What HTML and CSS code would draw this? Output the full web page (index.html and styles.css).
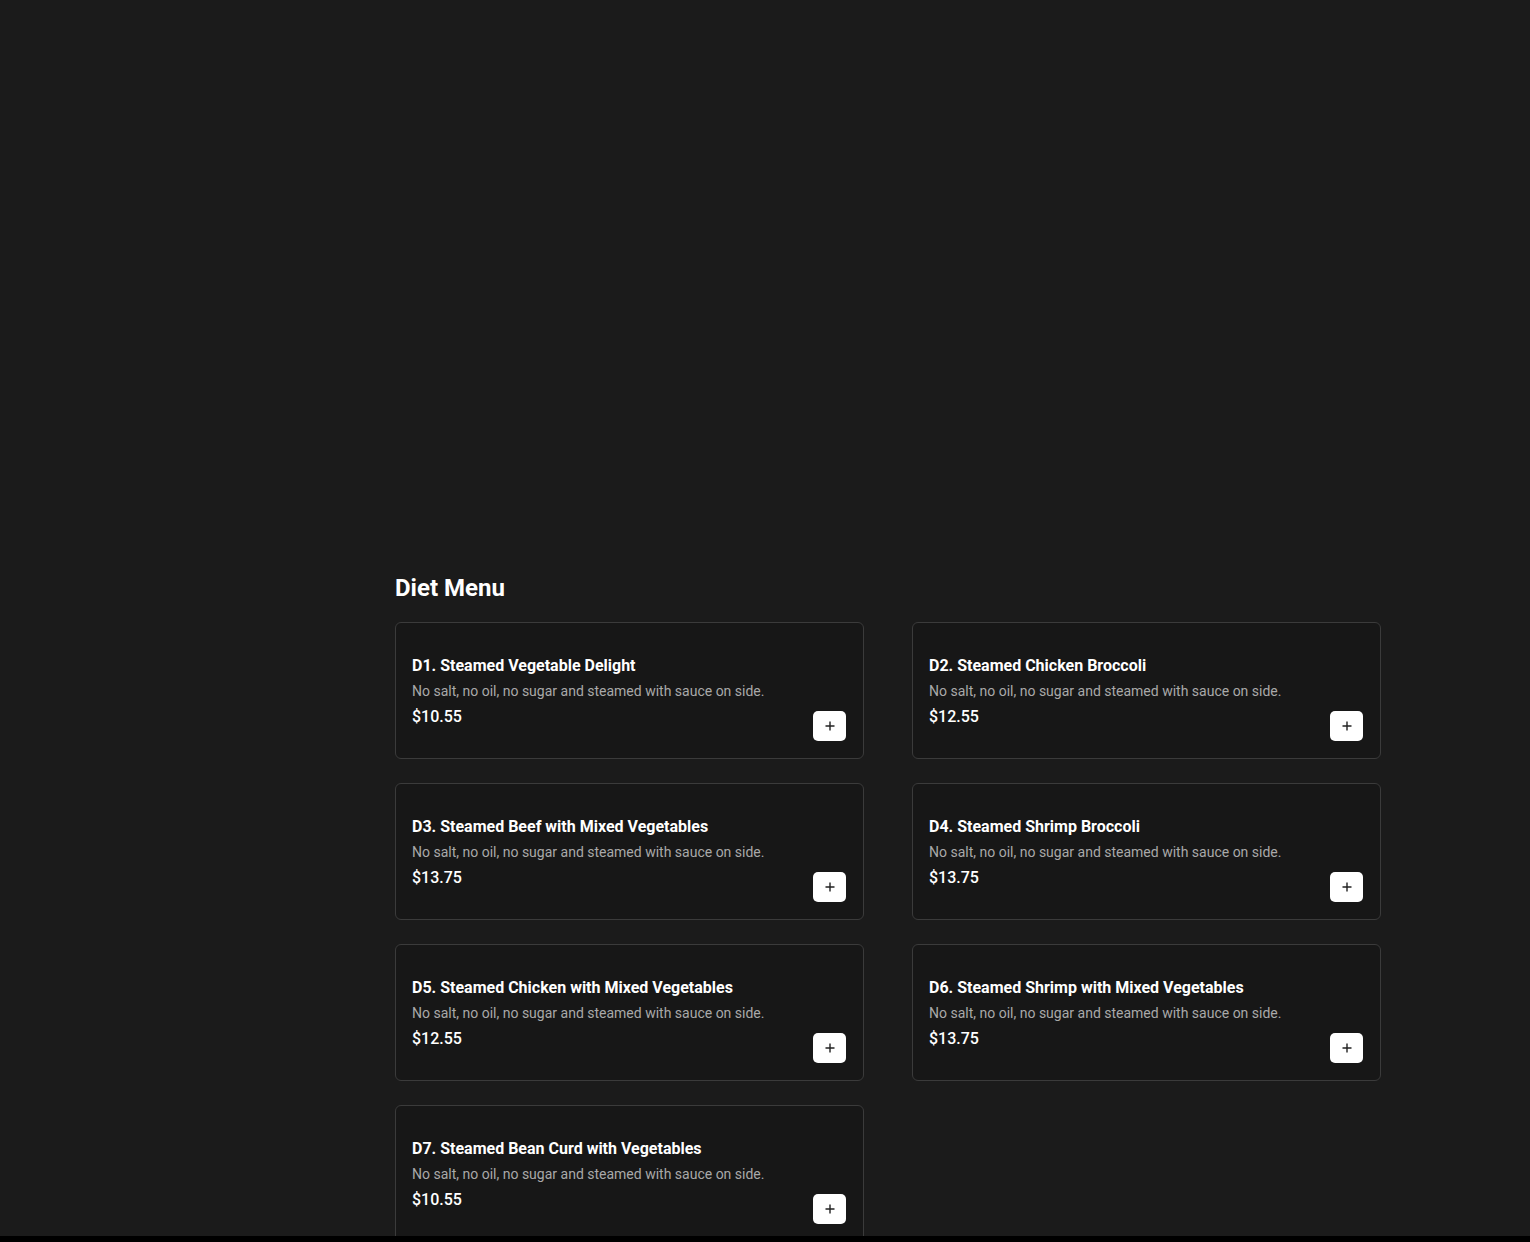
FILE: index.html
```html
<!DOCTYPE html>
<html lang="en">
<head>
  <meta charset="UTF-8">
  <meta name="viewport" content="width=device-width, initial-scale=1.0">
  <title>Diet Menu</title>
  <link rel="stylesheet" href="styles.css">
</head>
<body>
  <div class="hero"></div>

  <section class="menu-section">
    <h2 class="section-title">Diet Menu</h2>

    <div class="menu-grid">
      <div class="menu-card">
        <div class="item-info">
          <h3 class="item-name">D1. Steamed Vegetable Delight</h3>
          <p class="item-desc">No salt, no oil, no sugar and steamed with sauce on side.</p>
          <p class="item-price">$10.55</p>
        </div>
        <button class="add-button" aria-label="Add">
          <svg viewBox="0 0 12 12" width="12" height="12"><path d="M6 1.5v9M1.5 6h9"/></svg>
        </button>
      </div>

      <div class="menu-card">
        <div class="item-info">
          <h3 class="item-name">D2. Steamed Chicken Broccoli</h3>
          <p class="item-desc">No salt, no oil, no sugar and steamed with sauce on side.</p>
          <p class="item-price">$12.55</p>
        </div>
        <button class="add-button" aria-label="Add">
          <svg viewBox="0 0 12 12" width="12" height="12"><path d="M6 1.5v9M1.5 6h9"/></svg>
        </button>
      </div>

      <div class="menu-card">
        <div class="item-info">
          <h3 class="item-name">D3. Steamed Beef with Mixed Vegetables</h3>
          <p class="item-desc">No salt, no oil, no sugar and steamed with sauce on side.</p>
          <p class="item-price">$13.75</p>
        </div>
        <button class="add-button" aria-label="Add">
          <svg viewBox="0 0 12 12" width="12" height="12"><path d="M6 1.5v9M1.5 6h9"/></svg>
        </button>
      </div>

      <div class="menu-card">
        <div class="item-info">
          <h3 class="item-name">D4. Steamed Shrimp Broccoli</h3>
          <p class="item-desc">No salt, no oil, no sugar and steamed with sauce on side.</p>
          <p class="item-price">$13.75</p>
        </div>
        <button class="add-button" aria-label="Add">
          <svg viewBox="0 0 12 12" width="12" height="12"><path d="M6 1.5v9M1.5 6h9"/></svg>
        </button>
      </div>

      <div class="menu-card">
        <div class="item-info">
          <h3 class="item-name">D5. Steamed Chicken with Mixed Vegetables</h3>
          <p class="item-desc">No salt, no oil, no sugar and steamed with sauce on side.</p>
          <p class="item-price">$12.55</p>
        </div>
        <button class="add-button" aria-label="Add">
          <svg viewBox="0 0 12 12" width="12" height="12"><path d="M6 1.5v9M1.5 6h9"/></svg>
        </button>
      </div>

      <div class="menu-card">
        <div class="item-info">
          <h3 class="item-name">D6. Steamed Shrimp with Mixed Vegetables</h3>
          <p class="item-desc">No salt, no oil, no sugar and steamed with sauce on side.</p>
          <p class="item-price">$13.75</p>
        </div>
        <button class="add-button" aria-label="Add">
          <svg viewBox="0 0 12 12" width="12" height="12"><path d="M6 1.5v9M1.5 6h9"/></svg>
        </button>
      </div>

      <div class="menu-card">
        <div class="item-info">
          <h3 class="item-name">D7. Steamed Bean Curd with Vegetables</h3>
          <p class="item-desc">No salt, no oil, no sugar and steamed with sauce on side.</p>
          <p class="item-price">$10.55</p>
        </div>
        <button class="add-button" aria-label="Add">
          <svg viewBox="0 0 12 12" width="12" height="12"><path d="M6 1.5v9M1.5 6h9"/></svg>
        </button>
      </div>
    </div>
  </section>

  <div class="bottom-bar"></div>
</body>
</html>
```

FILE: styles.css
```css
* {
  box-sizing: border-box;
}

body {
  font-family: Roboto, "Liberation Sans", Arial, sans-serif;
  background: #1b1b1b;
  color: #fff;
  margin: 0;
}

.hero {
  height: 572px;
}

.menu-section {
  margin-left: 395px;
  width: 986px;
  padding-bottom: 40px;
}

.section-title {
  margin: 0 0 18px;
  font-size: 24px;
  line-height: 32px;
  font-weight: 700;
}

.menu-grid {
  display: grid;
  grid-template-columns: 1fr 1fr;
  column-gap: 48px;
  row-gap: 24px;
}

.menu-card {
  display: flex;
  justify-content: space-between;
  align-items: flex-end;
  background: #171717;
  border: 1px solid #3b3b3b;
  border-radius: 6px;
  padding: 31px 16px 16px;
}

.item-info {
  padding-bottom: 13px;
}

.item-name {
  margin: 0;
  font-size: 16px;
  line-height: 24px;
  font-weight: 700;
}

.item-desc {
  margin: 3px 0 0;
  font-size: 14px;
  line-height: 20px;
  color: #a9a9a9;
}

.item-price {
  margin: 4px 0 0;
  font-size: 16px;
  line-height: 24px;
  font-weight: 500;
}

.add-button {
  width: 33px;
  height: 30px;
  margin: 0 1px 1px 0;
  display: flex;
  justify-content: center;
  align-items: center;
  background: #fff;
  border: none;
  border-radius: 5px;
  padding: 0;
  cursor: pointer;
}

.add-button svg {
  stroke: #222;
  stroke-width: 1.4;
  fill: none;
}

.bottom-bar {
  position: fixed;
  left: 0;
  right: 0;
  bottom: 0;
  height: 6px;
  background: #000;
}
```
